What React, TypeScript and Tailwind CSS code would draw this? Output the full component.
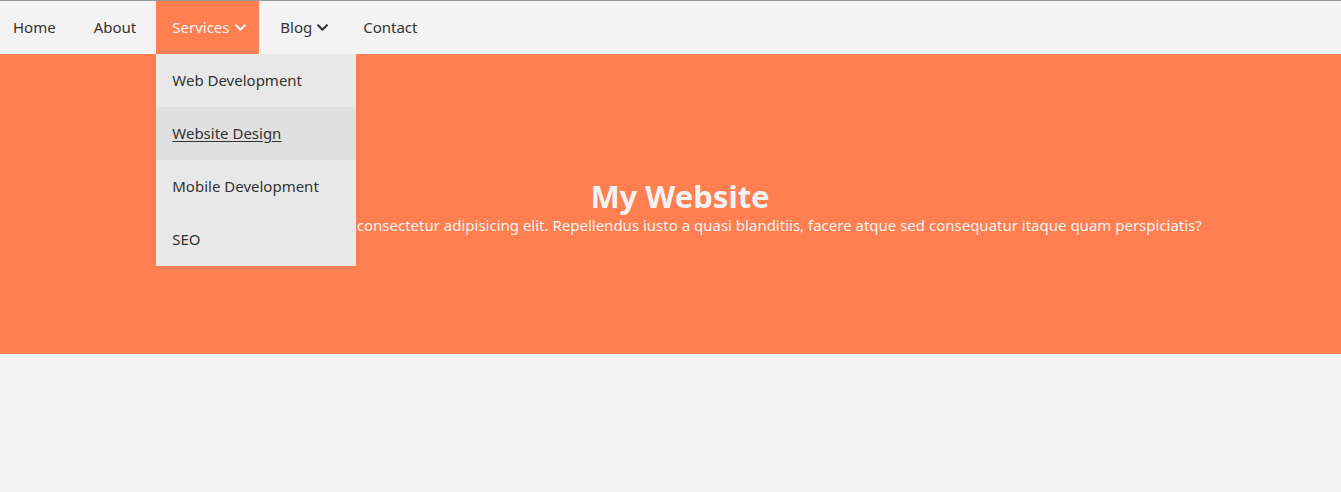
import React from "react";
import { FaChevronDown } from "react-icons/fa";

const font = { fontFamily: '"Noto Sans", "Open Sans", sans-serif' };

export default function App() {
  return (
    <div className="min-h-[492px] bg-[#f3f3f3] border-t border-[#999999] text-[#333333]" style={font}>
      <nav className="relative z-10 flex h-[53px] items-stretch text-[15px]">
        <a className="flex items-center pl-[13px] pr-[18px]">Home</a>
        <a className="flex items-center px-[20px]">About</a>
        <div className="relative flex">
          <a className="flex w-[103px] items-center gap-[4px] bg-[#ff7f50] pl-4 text-[#f3f3f3]">
            Services <FaChevronDown className="text-[13px]" />
          </a>
          <div className="absolute left-0 top-[53px] w-[200px] bg-[#e8e8e8]">
            <a className="flex h-[53px] items-center px-4">Web Development</a>
            <a className="flex h-[53px] items-center bg-[#e0e0e0] px-4 underline underline-offset-2">Website Design</a>
            <a className="flex h-[53px] items-center px-4">Mobile Development</a>
            <a className="flex h-[53px] items-center px-4">SEO</a>
          </div>
        </div>
        <a className="flex items-center gap-[4px] pl-[21px] pr-[18px]">
          Blog <FaChevronDown className="text-[13px]" />
        </a>
        <a className="flex items-center px-[16px]">Contact</a>
      </nav>
      <section className="flex h-[300px] flex-col items-center justify-center bg-[#ff7f50] pl-[19px] pt-[6px] text-center text-[#f3f3f3]">
        <h1 className="text-[31px] font-bold leading-[36px]">My Website</h1>
        <p className="text-[15px] leading-[22px]">
          Lorem ipsum dolor sit amet consectetur adipisicing elit. Repellendus iusto a quasi blanditiis, facere atque sed consequatur itaque quam perspiciatis?
        </p>
      </section>
    </div>
  );
}
